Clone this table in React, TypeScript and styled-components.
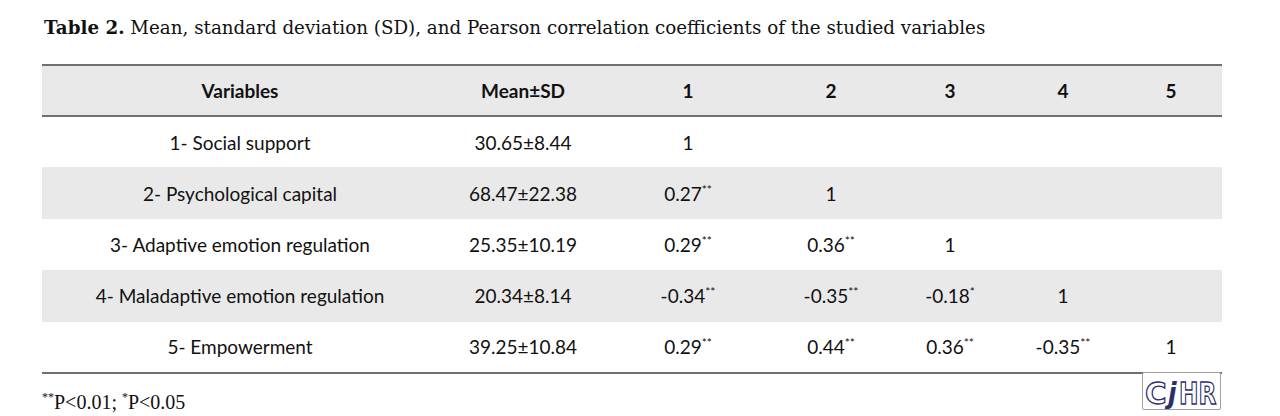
import * as React from 'react';
import styled, { createGlobalStyle } from 'styled-components';

const GlobalStyle = createGlobalStyle`
  body {
    margin: 0;
    background: #ffffff;
  }
`;

type Cell = { v: string; sig?: string };

const rows: { name: string; mean: string; cells: Cell[]; shaded?: boolean }[] = [
  { name: '1- Social support', mean: '30.65±8.44', cells: [{ v: '1' }] },
  {
    name: '2- Psychological capital',
    mean: '68.47±22.38',
    cells: [{ v: '0.27', sig: '**' }, { v: '1' }],
    shaded: true,
  },
  {
    name: '3- Adaptive emotion regulation',
    mean: '25.35±10.19',
    cells: [{ v: '0.29', sig: '**' }, { v: '0.36', sig: '**' }, { v: '1' }],
  },
  {
    name: '4- Maladaptive emotion regulation',
    mean: '20.34±8.14',
    cells: [
      { v: '-0.34', sig: '**' },
      { v: '-0.35', sig: '**' },
      { v: '-0.18', sig: '*' },
      { v: '1' },
    ],
    shaded: true,
  },
  {
    name: '5- Empowerment',
    mean: '39.25±10.84',
    cells: [
      { v: '0.29', sig: '**' },
      { v: '0.44', sig: '**' },
      { v: '0.36', sig: '**' },
      { v: '-0.35', sig: '**' },
      { v: '1' },
    ],
  },
];

const colWidths = [396, 170, 160, 126, 112, 114, 102];

const App: React.FC = () => {
  return (
    <Page>
      <GlobalStyle />
      <Caption>
        <b>Table 2.</b> Mean, standard deviation (SD), and Pearson correlation coefficients of the studied variables
      </Caption>
      <Table>
        <colgroup>
          {colWidths.map((w, i) => (
            <col key={i} style={{ width: w }} />
          ))}
        </colgroup>
        <thead>
          <HeadRow>
            <Th>Variables</Th>
            <Th>Mean±SD</Th>
            <Th>1</Th>
            <Th>2</Th>
            <Th>3</Th>
            <Th>4</Th>
            <Th>5</Th>
          </HeadRow>
        </thead>
        <tbody>
          {rows.map((r) => (
            <Row key={r.name} $shaded={r.shaded}>
              <Td>{r.name}</Td>
              <Td>{r.mean}</Td>
              {[0, 1, 2, 3, 4].map((i) => {
                const c = r.cells[i];
                return (
                  <Td key={i}>
                    {c ? c.v : ''}
                    {c && c.sig ? <Sig>{c.sig}</Sig> : null}
                  </Td>
                );
              })}
            </Row>
          ))}
        </tbody>
      </Table>
      <Footer>
        <Note>
          <NoteSig>**</NoteSig>P&lt;0.01; <NoteSig>*</NoteSig>P&lt;0.05
        </Note>
        <Logo />
      </Footer>
    </Page>
  );
};

const Logo: React.FC = () => (
  <LogoBox width="79" height="38" viewBox="0 0 79 38">
    <rect x="0.5" y="0.5" width="78" height="37" rx="1.5" fill="#fff" stroke="#a0a0a0" />
    <g fontFamily="'DejaVu Sans', sans-serif" fontWeight="bold" fontSize="31">
      <g transform="translate(3 0) scale(0.95 1)">
        <text x="0" y="32" fill="#fff" stroke="#2b2d6e" strokeWidth="1.3">C</text>
      </g>
      <g transform="translate(26 0) scale(0.9 1)">
        <text x="0" y="31" fill="#2b2d6e" fontStyle="italic" fontSize="28">j</text>
      </g>
      <g transform="translate(37 0) scale(0.75 1)">
        <text x="0" y="32" fill="#fff" stroke="#2b2d6e" strokeWidth="1.4">HR</text>
      </g>
    </g>
  </LogoBox>
);

export default App;

const Page = styled.div`
  width: 1280px;
  height: 416px;
  overflow: hidden;
  padding: 17px 0 0 42px;
  box-sizing: border-box;
`;

const Caption = styled.div`
  font-family: 'DejaVu Serif', 'Liberation Serif', serif;
  font-size: 18.3px;
  color: #111;
  padding-left: 2px;
  height: 28px;
  b {
    font-weight: bold;
  }
`;

const Table = styled.table`
  margin-top: 19px;
  width: 1180px;
  border-collapse: collapse;
  table-layout: fixed;
  font-family: Lato, 'Open Sans', sans-serif;
  font-size: 19px;
  color: #111;
  border-bottom: 2px solid #707070;
`;

const HeadRow = styled.tr`
  background: #e9e9e9;
  height: 51px;
  border-top: 2px solid #707070;
  border-bottom: 2px solid #707070;
`;

const Th = styled.th`
  font-weight: bold;
  text-align: center;
  padding: 0;
`;

const Row = styled.tr<{ $shaded?: boolean }>`
  height: 51.4px;
  background: ${(p) => (p.$shaded ? '#e9e9e9' : '#ffffff')};
`;

const Td = styled.td`
  text-align: center;
  padding: 0;
  white-space: nowrap;
`;

const Sig = styled.sup`
  font-size: 12px;
  vertical-align: 7px;
  line-height: 0;
`;

const Footer = styled.div`
  width: 1180px;
  display: flex;
  justify-content: space-between;
  align-items: flex-start;
`;

const Note = styled.div`
  font-family: 'Liberation Serif', 'Times New Roman', serif;
  font-size: 20px;
  color: #111;
  margin-top: 17px;
`;

const NoteSig = styled.sup`
  font-size: 12px;
  vertical-align: 8px;
  line-height: 0;
`;

const LogoBox = styled.svg`
  display: block;
  margin-top: -2px;
  margin-right: 1px;
`;
